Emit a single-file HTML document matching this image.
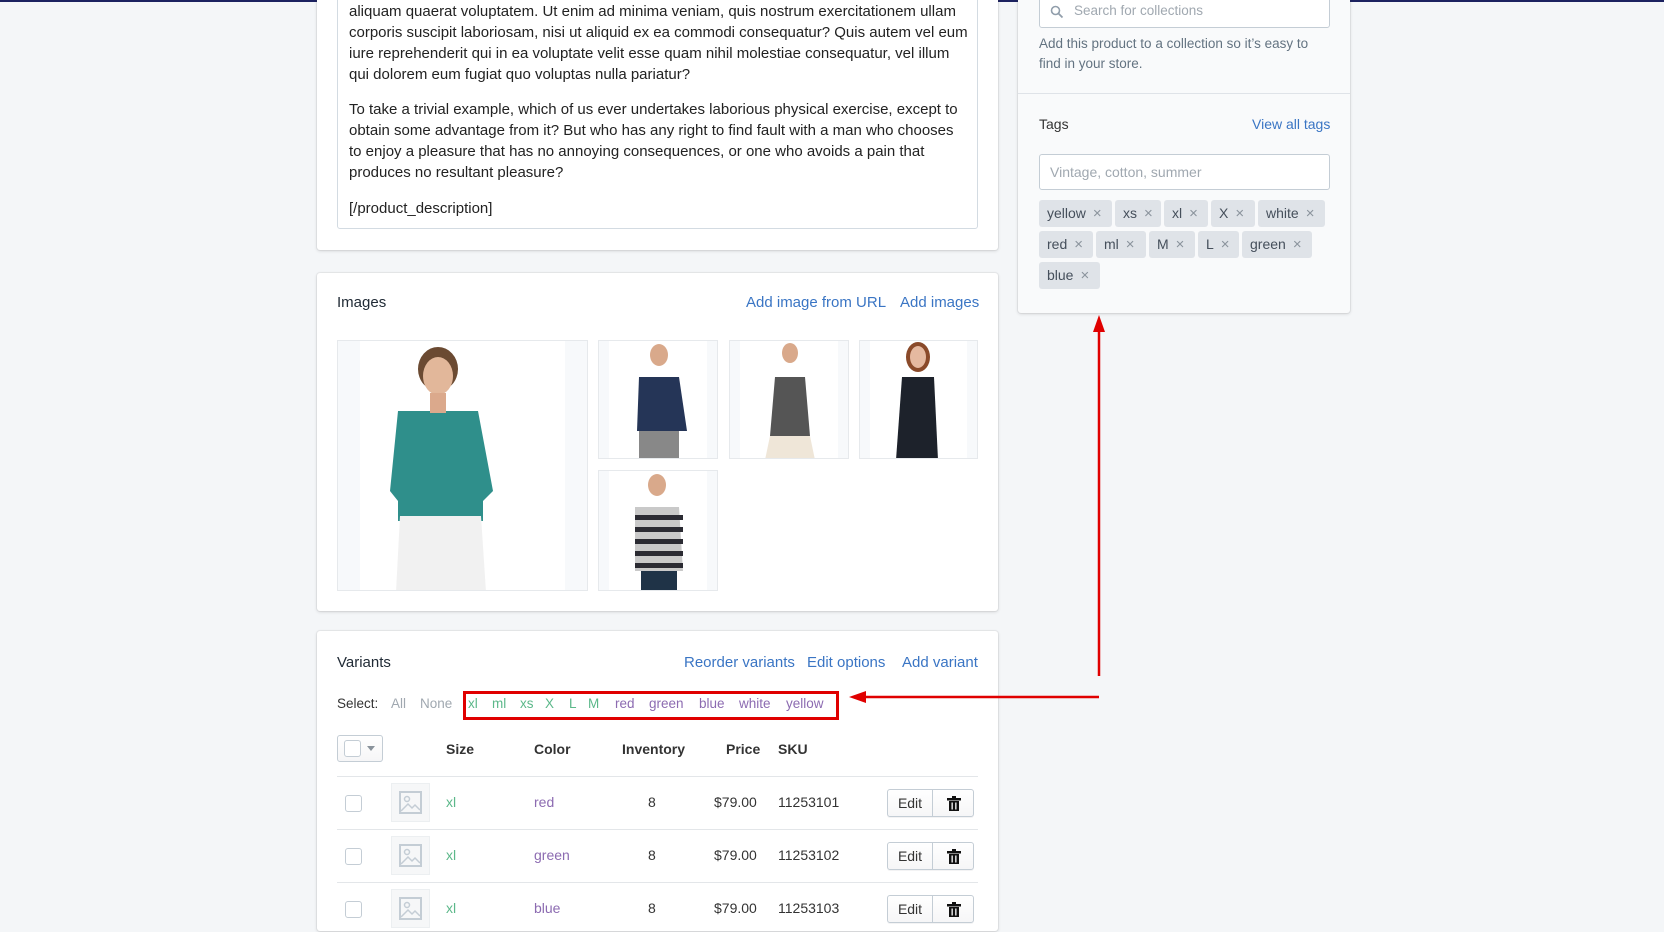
<!DOCTYPE html>
<html><head><meta charset="utf-8"><style>
*{box-sizing:border-box;margin:0;padding:0}
body{width:1664px;height:918px;overflow:hidden;background:#f4f6f8;font-family:"Liberation Sans",sans-serif;position:relative;color:#212b36}
.a{position:absolute}
.card{position:absolute;background:#fff;border-radius:3px;box-shadow:0 0 0 1px rgba(63,63,68,.06),0 1px 3px rgba(63,63,68,.18)}
.desc{font-size:15px;line-height:21px;color:#222;white-space:nowrap}
.link{color:#3a75c4;font-size:15px}
.h{font-size:15px;color:#212b36}
.img{position:absolute;border:1px solid #e6e9ec;background:#f7f9fb;overflow:hidden}
.img .w{position:absolute;top:0;bottom:0;background:#fff}
.tag{position:absolute;height:27px;background:#dfe3e8;border-radius:3px;font-size:14px;color:#454f5b;line-height:27px;padding-left:8px}
.tag span{color:#8a939c;margin-left:7px;font-size:15px}
.sel{font-size:13.5px;top:696px}
.th{font-size:14px;font-weight:bold;color:#333;top:741px}
.cb{position:absolute;width:17px;height:17px;border:1px solid #c4cdd5;border-radius:3px;background:#fff}
.ph{position:absolute;width:39px;height:39px;border:1px solid #eceff1;background:#f6f7f8}
.td{position:absolute;font-size:14px;color:#333}
.a.g,.td.g{color:#5cb88a}
.a.p,.td.p{color:#8c6bb1}
.btn{position:absolute;width:87px;height:28px;border:1px solid #c4cdd5;border-radius:3px;background:linear-gradient(#fff,#f6f6f7);box-shadow:0 1px 0 rgba(22,29,37,.05)}
.btn b{position:absolute;left:0;top:0;width:45px;height:26px;border-right:1px solid #c4cdd5;font-weight:normal;font-size:14px;text-align:center;line-height:26px;color:#333}
.line{position:absolute;left:337px;width:641px;height:1px;background:#e3e6e9}
</style></head><body>
<div class="a" style="left:0;top:0;width:1664px;height:2px;background:#1c2260"></div>

<div class="card" style="left:317px;top:-10px;width:681px;height:260px"></div>
<div class="a" style="left:337px;top:-10px;width:641px;height:239px;border:1px solid #d3dbe2;border-radius:3px;background:#fff"></div>
<div class="a desc" style="left:349px;top:1px">aliquam quaerat voluptatem. Ut enim ad minima veniam, quis nostrum exercitationem ullam<br>corporis suscipit laboriosam, nisi ut aliquid ex ea commodi consequatur? Quis autem vel eum<br>iure reprehenderit qui in ea voluptate velit esse quam nihil molestiae consequatur, vel illum<br>qui dolorem eum fugiat quo voluptas nulla pariatur?</div>
<div class="a desc" style="left:349px;top:99px">To take a trivial example, which of us ever undertakes laborious physical exercise, except to<br>obtain some advantage from it? But who has any right to find fault with a man who chooses<br>to enjoy a pleasure that has no annoying consequences, or one who avoids a pain that<br>produces no resultant pleasure?</div>
<div class="a desc" style="left:349px;top:198px">[/product_description]</div>

<div class="card" style="left:317px;top:273px;width:681px;height:338px"></div>
<div class="a h" style="left:337px;top:294px">Images</div>
<div class="a link" style="left:746px;top:294px">Add image from URL</div>
<div class="a link" style="left:900px;top:294px">Add images</div>

<div class="img" style="left:337px;top:340px;width:251px;height:251px"><div class="w" style="left:22px;right:22px"></div>
<svg class="a" style="left:0;top:0" width="251" height="251"><ellipse cx="100" cy="28" rx="20" ry="22" fill="#6b4a32"/><ellipse cx="100" cy="35" rx="15" ry="19" fill="#e2b79a"/><path d="M60 70 L140 70 L155 150 L145 160 L145 180 L60 180 L60 160 L52 150 Z" fill="#2f8f8b"/><path d="M62 175 L143 175 L148 251 L58 251 Z" fill="#f1f1f1"/><rect x="92" y="52" width="16" height="20" fill="#dba98c"/></svg></div>
<div class="img" style="left:598px;top:340px;width:120px;height:119px"><div class="w" style="left:10px;right:10px"></div>
<svg class="a" style="left:0;top:0" width="120" height="119"><ellipse cx="60" cy="14" rx="9" ry="11" fill="#d9a98b"/><path d="M40 36 L80 36 L88 90 L38 90 Z" fill="#253557"/><rect x="40" y="90" width="40" height="29" fill="#888"/></svg></div>
<div class="img" style="left:729px;top:340px;width:120px;height:119px"><div class="w" style="left:10px;right:10px"></div>
<svg class="a" style="left:0;top:0" width="120" height="119"><ellipse cx="60" cy="12" rx="8" ry="10" fill="#d9a98b"/><path d="M45 36 L75 36 L80 95 L40 95 Z" fill="#555"/><path d="M40 95 L80 95 L85 119 L35 119 Z" fill="#efe6d8"/></svg></div>
<div class="img" style="left:859px;top:340px;width:119px;height:119px"><div class="w" style="left:10px;right:10px"></div>
<svg class="a" style="left:0;top:0" width="119" height="119"><ellipse cx="58" cy="16" rx="12" ry="15" fill="#8a4a2a"/><ellipse cx="58" cy="16" rx="8" ry="11" fill="#e5b9a0"/><path d="M42 36 L74 36 L78 119 L36 119 Z" fill="#1d222b"/></svg></div>
<div class="img" style="left:598px;top:470px;width:120px;height:121px"><div class="w" style="left:10px;right:10px"></div>
<svg class="a" style="left:0;top:0" width="120" height="121"><ellipse cx="58" cy="14" rx="9" ry="11" fill="#d9a98b"/><path d="M36 36 L80 36 L84 100 L36 100 Z" fill="#c9c9c9"/><g fill="#2b2b33"><rect x="36" y="44" width="48" height="5"/><rect x="36" y="56" width="48" height="5"/><rect x="36" y="68" width="48" height="5"/><rect x="36" y="80" width="48" height="5"/><rect x="36" y="92" width="48" height="5"/></g><rect x="42" y="100" width="36" height="21" fill="#1f3347"/></svg></div>

<div class="card" style="left:317px;top:631px;width:681px;height:300px"></div>
<div class="a h" style="left:337px;top:654px">Variants</div>
<div class="a link" style="left:684px;top:654px">Reorder variants</div>
<div class="a link" style="left:807px;top:654px">Edit options</div>
<div class="a link" style="left:902px;top:654px">Add variant</div>
<div class="a sel" style="left:337px;color:#333">Select:</div>
<div class="a sel" style="left:391px;color:#a0a8b0">All</div>
<div class="a sel" style="left:420px;color:#a0a8b0">None</div>
<div class="a sel g" style="left:468px">xl</div>
<div class="a sel g" style="left:492px">ml</div>
<div class="a sel g" style="left:520px">xs</div>
<div class="a sel g" style="left:545px">X</div>
<div class="a sel g" style="left:569px">L</div>
<div class="a sel g" style="left:588px">M</div>
<div class="a sel p" style="left:615px">red</div>
<div class="a sel p" style="left:649px">green</div>
<div class="a sel p" style="left:699px">blue</div>
<div class="a sel p" style="left:739px">white</div>
<div class="a sel p" style="left:786px">yellow</div>
<div class="a" style="left:463px;top:691px;width:376px;height:29px;border:3px solid #e00000"></div>
<svg class="a" style="left:0;top:0" width="1664" height="918">
<line x1="1099" y1="697" x2="862" y2="697" stroke="#e00000" stroke-width="2.5"/><path d="M849 697 L866 691 L866 703 Z" fill="#e00000"/>
<line x1="1099" y1="676" x2="1099" y2="328" stroke="#e00000" stroke-width="2.5"/><path d="M1099 315 L1093 332 L1105 332 Z" fill="#e00000"/>
</svg>

<div class="a" style="left:337px;top:735px;width:46px;height:27px;border:1px solid #c4cdd5;border-radius:3px;background:linear-gradient(#fff,#f6f6f7)"></div>
<div class="cb" style="left:344px;top:740px"></div>
<div class="a" style="left:367px;top:746px;border-left:4px solid transparent;border-right:4px solid transparent;border-top:5px solid #8a939c"></div>
<div class="a th" style="left:446px">Size</div>
<div class="a th" style="left:534px">Color</div>
<div class="a th" style="left:622px">Inventory</div>
<div class="a th" style="left:726px">Price</div>
<div class="a th" style="left:778px">SKU</div>
<div class="line" style="top:776px"></div>
<div class="line" style="top:829px"></div>
<div class="line" style="top:882px"></div>

<div class="cb" style="left:345px;top:795px"></div><div class="ph" style="left:391px;top:783px"><svg width="37" height="37"><rect x="8" y="8" width="21" height="21" fill="none" stroke="#c4cdd5" stroke-width="2"/><circle cx="15" cy="15" r="2.5" fill="none" stroke="#c4cdd5" stroke-width="1.5"/><path d="M9 27 L16 20 L20 24 L23 21 L28 26" fill="none" stroke="#c4cdd5" stroke-width="1.5"/></svg></div>
<div class="td g" style="left:446px;top:794px">xl</div><div class="td p" style="left:534px;top:794px">red</div><div class="td" style="left:648px;top:794px">8</div><div class="td" style="left:714px;top:794px">$79.00</div><div class="td" style="left:778px;top:794px">11253101</div>
<div class="btn" style="left:887px;top:789px"><b>Edit</b><svg class="a" style="left:58px;top:6px" width="16" height="16"><rect x="6" y="0" width="4" height="2" fill="#111"/><rect x="1" y="2" width="14" height="2.5" fill="#111"/><path d="M3 5 H13 V15 H3 Z" fill="#111"/><rect x="5.5" y="6.5" width="1.3" height="7" fill="#fff"/><rect x="9.2" y="6.5" width="1.3" height="7" fill="#fff"/></svg></div>

<div class="cb" style="left:345px;top:848px"></div><div class="ph" style="left:391px;top:836px"><svg width="37" height="37"><rect x="8" y="8" width="21" height="21" fill="none" stroke="#c4cdd5" stroke-width="2"/><circle cx="15" cy="15" r="2.5" fill="none" stroke="#c4cdd5" stroke-width="1.5"/><path d="M9 27 L16 20 L20 24 L23 21 L28 26" fill="none" stroke="#c4cdd5" stroke-width="1.5"/></svg></div>
<div class="td g" style="left:446px;top:847px">xl</div><div class="td p" style="left:534px;top:847px">green</div><div class="td" style="left:648px;top:847px">8</div><div class="td" style="left:714px;top:847px">$79.00</div><div class="td" style="left:778px;top:847px">11253102</div>
<div class="btn" style="left:887px;top:842px"><b>Edit</b><svg class="a" style="left:58px;top:6px" width="16" height="16"><rect x="6" y="0" width="4" height="2" fill="#111"/><rect x="1" y="2" width="14" height="2.5" fill="#111"/><path d="M3 5 H13 V15 H3 Z" fill="#111"/><rect x="5.5" y="6.5" width="1.3" height="7" fill="#fff"/><rect x="9.2" y="6.5" width="1.3" height="7" fill="#fff"/></svg></div>

<div class="cb" style="left:345px;top:901px"></div><div class="ph" style="left:391px;top:889px"><svg width="37" height="37"><rect x="8" y="8" width="21" height="21" fill="none" stroke="#c4cdd5" stroke-width="2"/><circle cx="15" cy="15" r="2.5" fill="none" stroke="#c4cdd5" stroke-width="1.5"/><path d="M9 27 L16 20 L20 24 L23 21 L28 26" fill="none" stroke="#c4cdd5" stroke-width="1.5"/></svg></div>
<div class="td g" style="left:446px;top:900px">xl</div><div class="td p" style="left:534px;top:900px">blue</div><div class="td" style="left:648px;top:900px">8</div><div class="td" style="left:714px;top:900px">$79.00</div><div class="td" style="left:778px;top:900px">11253103</div>
<div class="btn" style="left:887px;top:895px"><b>Edit</b><svg class="a" style="left:58px;top:6px" width="16" height="16"><rect x="6" y="0" width="4" height="2" fill="#111"/><rect x="1" y="2" width="14" height="2.5" fill="#111"/><path d="M3 5 H13 V15 H3 Z" fill="#111"/><rect x="5.5" y="6.5" width="1.3" height="7" fill="#fff"/><rect x="9.2" y="6.5" width="1.3" height="7" fill="#fff"/></svg></div>

<div class="card" style="left:1018px;top:-10px;width:332px;height:323px;background:#f9fafb"></div>
<div class="a" style="left:1018px;top:93px;width:332px;height:1px;background:#dfe3e8"></div>
<div class="a" style="left:1039px;top:-10px;width:291px;height:38px;border:1px solid #c4cdd5;border-radius:3px;background:#fff"></div>
<svg class="a" style="left:1050px;top:5px" width="14" height="14"><circle cx="5.5" cy="5.5" r="4" fill="none" stroke="#919eab" stroke-width="1.6"/><line x1="8.5" y1="8.5" x2="12.5" y2="12.5" stroke="#919eab" stroke-width="1.8"/></svg>
<div class="a" style="left:1074px;top:3px;font-size:13.5px;color:#a0a8b0">Search for collections</div>
<div class="a" style="left:1039px;top:34px;width:290px;font-size:13.5px;line-height:20px;color:#637381">Add this product to a collection so it’s easy to find in your store.</div>
<div class="a" style="left:1039px;top:116px;font-size:14px;color:#333">Tags</div>
<div class="a" style="left:1252px;top:116px;font-size:14px;color:#3a75c4">View all tags</div>
<div class="a" style="left:1039px;top:154px;width:291px;height:36px;border:1px solid #c4cdd5;border-radius:3px;background:#fff;font-size:14px;color:#a0a8b0;padding:9px 10px">Vintage, cotton, summer</div>
<div class="tag" style="left:1039px;top:200px;width:73px">yellow<span>×</span></div>
<div class="tag" style="left:1115px;top:200px;width:46px">xs<span>×</span></div>
<div class="tag" style="left:1164px;top:200px;width:44px">xl<span>×</span></div>
<div class="tag" style="left:1211px;top:200px;width:44px">X<span>×</span></div>
<div class="tag" style="left:1258px;top:200px;width:67px">white<span>×</span></div>
<div class="tag" style="left:1039px;top:231px;width:54px">red<span>×</span></div>
<div class="tag" style="left:1096px;top:231px;width:50px">ml<span>×</span></div>
<div class="tag" style="left:1149px;top:231px;width:46px">M<span>×</span></div>
<div class="tag" style="left:1198px;top:231px;width:41px">L<span>×</span></div>
<div class="tag" style="left:1242px;top:231px;width:70px">green<span>×</span></div>
<div class="tag" style="left:1039px;top:262px;width:61px">blue<span>×</span></div>
</body></html>
